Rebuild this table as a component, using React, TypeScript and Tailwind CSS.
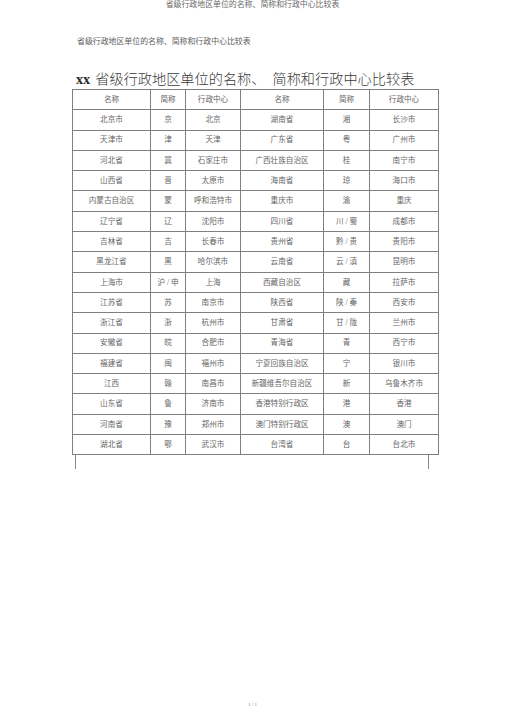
const FONT = '"Liberation Serif", "Noto Sans CJK SC", serif';

const header = ['名称', '简称', '行政中心', '名称', '简称', '行政中心'];

const rows: string[][] = [
  ['北京市', '京', '北京', '湖南省', '湘', '长沙市'],
  ['天津市', '津', '天津', '广东省', '粤', '广州市'],
  ['河北省', '冀', '石家庄市', '广西壮族自治区', '桂', '南宁市'],
  ['山西省', '晋', '太原市', '海南省', '琼', '海口市'],
  ['内蒙古自治区', '蒙', '呼和浩特市', '重庆市', '渝', '重庆'],
  ['辽宁省', '辽', '沈阳市', '四川省', '川 / 蜀', '成都市'],
  ['吉林省', '吉', '长春市', '贵州省', '黔 / 贵', '贵阳市'],
  ['黑龙江省', '黑', '哈尔滨市', '云南省', '云 / 滇', '昆明市'],
  ['上海市', '沪 / 申', '上海', '西藏自治区', '藏', '拉萨市'],
  ['江苏省', '苏', '南京市', '陕西省', '陕 / 秦', '西安市'],
  ['浙江省', '浙', '杭州市', '甘肃省', '甘 / 陇', '兰州市'],
  ['安徽省', '皖', '合肥市', '青海省', '青', '西宁市'],
  ['福建省', '闽', '福州市', '宁夏回族自治区', '宁', '银川市'],
  ['江西', '赣', '南昌市', '新疆维吾尔自治区', '新', '乌鲁木齐市'],
  ['山东省', '鲁', '济南市', '香港特别行政区', '港', '香港'],
  ['河南省', '豫', '郑州市', '澳门特别行政区', '澳', '澳门'],
  ['湖北省', '鄂', '武汉市', '台湾省', '台', '台北市'],
];

function Row({ cells }: { cells: string[] }) {
  return (
    <tr className="h-[20.3px]">
      {cells.map((c, i) => (
        <td key={i} className="border border-[#808080] p-0 text-center align-middle leading-none">
          {c}
        </td>
      ))}
    </tr>
  );
}

export default function App() {
  return (
    <div className="flex h-[714px] w-[505px] flex-col bg-white text-[#555]" style={{ fontFamily: FONT }}>
      {/* running header */}
      <p className="pt-[1px] text-center text-[7.9px] leading-[8px] text-[#6a6a6a]">
        省级行政地区单位的名称、简称和行政中心比较表
      </p>

      <div className="pl-[72px]">
        <p className="mt-[29px] pl-[5px] text-[7.9px] leading-[8px] text-[#5e5e5e]">
          省级行政地区单位的名称、简称和行政中心比较表
        </p>

        {/* title */}
        <h1 className="mt-[25px] flex items-baseline pl-[4px] text-[14.2px] leading-[16px] font-light text-[#3a3a3a]">
          <span className="mr-[5px] font-bold text-[#2a2a2a]">xx</span>
          <span>省级行政地区单位的名称、</span>
          <span className="ml-[7px]">简称和行政中心比较表</span>
        </h1>

        <table className="mt-[2px] w-[366px] table-fixed border-collapse border-[1.5px] border-[#707070] text-[7.6px] text-[#666]">
          <colgroup>
            <col className="w-[78px]" />
            <col className="w-[35px]" />
            <col className="w-[55px]" />
            <col className="w-[83px]" />
            <col className="w-[46px]" />
            <col className="w-[69px]" />
          </colgroup>
          <tbody>
            <Row cells={header} />
            {rows.map((r, i) => (
              <Row key={i} cells={r} />
            ))}
          </tbody>
        </table>

        {/* overflow box below the table */}
        <div className="ml-[3px] h-[14px] w-[354px] border-x border-[#8a8a8a]" />
      </div>

      <p className="mt-auto pb-[7px] text-center text-[5px] leading-[5px] text-[#777]">1 / 1</p>
    </div>
  );
}
